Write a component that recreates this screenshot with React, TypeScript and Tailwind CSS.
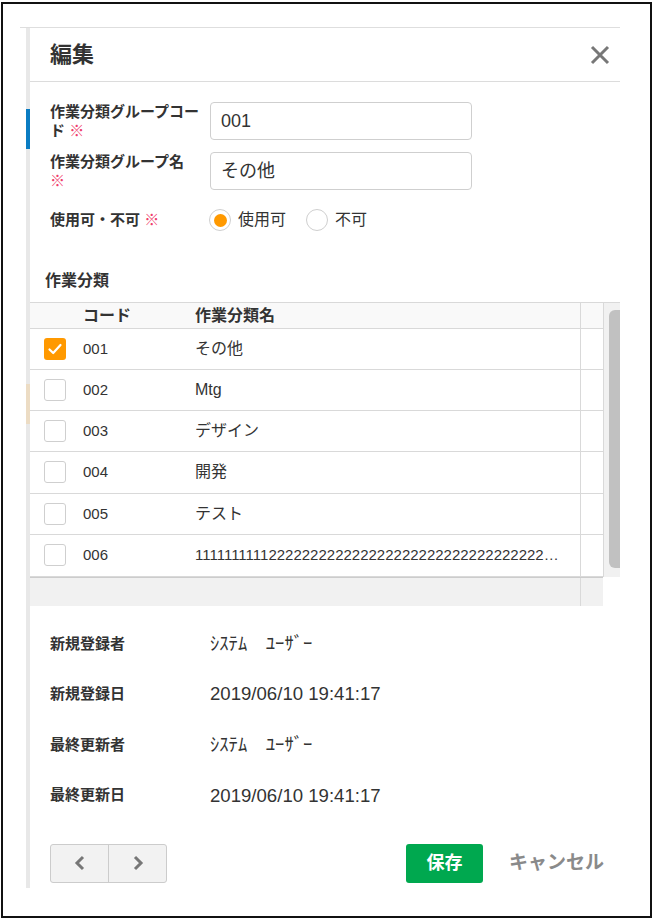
import React from "react";

const Req = () => <span className="text-[#ef3d6b] font-normal">※</span>;

const rows = [
  { code: "001", name: "その他", checked: true },
  { code: "002", name: "Mtg", checked: false },
  { code: "003", name: "デザイン", checked: false },
  { code: "004", name: "開発", checked: false },
  { code: "005", name: "テスト", checked: false },
  { code: "006", name: "1111111111" + "2".repeat(40), checked: false },
];

function Checkbox({ checked }: { checked: boolean }) {
  if (checked) {
    return (
      <div className="w-[22px] h-[22px] rounded-[3px] bg-[#ff9900] flex items-center justify-center">
        <svg width="16" height="16" viewBox="0 0 16 16" fill="none">
          <path d="M2.5 8.5 L6.2 12 L13.5 4" stroke="#fff" strokeWidth="2.2" strokeLinecap="round" strokeLinejoin="round" />
        </svg>
      </div>
    );
  }
  return <div className="w-[22px] h-[22px] rounded-[3px] border border-[#cfcfcf] bg-white" />;
}

function Radio({ on }: { on: boolean }) {
  return (
    <div className="w-[22px] h-[22px] rounded-full border border-[#cfcfcf] bg-white flex items-center justify-center">
      {on && <div className="w-[13px] h-[13px] rounded-full bg-[#ff9900]" />}
    </div>
  );
}

export default function App() {
  return (
    <div className="w-[656px] h-[924px] bg-white overflow-hidden font-['Liberation_Sans','Noto_Sans_CJK_JP',sans-serif] text-[#333]">
      <div className="ml-[1px] mt-[2px] w-[651px] h-[916px] border-2 border-[#111] overflow-hidden">
        <div className="ml-[17px] mt-[23px] w-[600px] border-t border-[#dedede]">
          <div className="flex">
            {/* background page strip */}
            <div className="w-[10px] flex">
              <div className="ml-[6px] w-[4px] flex flex-col">
                <div className="h-[81px] bg-[#e8e8e8]" />
                <div className="h-[40px] bg-[#0a7cc2]" />
                <div className="h-[235px] bg-[#e8e8e8]" />
                <div className="h-[40px] bg-[#ecdcc4]" />
                <div className="h-[464px] bg-[#e8e8e8]" />
              </div>
            </div>

            {/* modal */}
            <div className="w-[590px] bg-white">
              {/* header */}
              <div className="h-[54px] border-b border-[#dcdcdc] flex items-center justify-between pl-[20px] pr-[10px]">
                <div className="text-[22px] font-bold leading-none">編集</div>
                <svg width="20" height="20" viewBox="0 0 20 20" fill="none">
                  <path d="M2 2 L18 18 M18 2 L2 18" stroke="#777" strokeWidth="3" />
                </svg>
              </div>

              {/* form */}
              <div className="px-[20px] pt-[20px]">
                <div className="flex h-[38px]">
                  <div className="w-[152px] text-[15px] font-bold leading-[19px]">
                    作業分類グループコード <Req />
                  </div>
                  <div className="ml-[8px] w-[262px] h-[38px] border border-[#cfcfcf] rounded-[4px] flex items-center pl-[10px] text-[18px]">
                    001
                  </div>
                </div>
                <div className="flex h-[38px] mt-[12px]">
                  <div className="w-[152px] text-[15px] font-bold leading-[19px]">
                    作業分類グループ名 <Req />
                  </div>
                  <div className="ml-[8px] w-[262px] h-[38px] border border-[#cfcfcf] rounded-[4px] flex items-center pl-[10px] text-[18px]">
                    その他
                  </div>
                </div>
                <div className="flex items-center h-[22px] mt-[19px]">
                  <div className="w-[159px] text-[15px] font-bold">
                    使用可・不可 <Req />
                  </div>
                  <div className="flex items-center">
                    <Radio on={true} />
                    <span className="ml-[7px] text-[16px]">使用可</span>
                  </div>
                  <div className="flex items-center ml-[20px]">
                    <Radio on={false} />
                    <span className="ml-[7px] text-[16px]">不可</span>
                  </div>
                </div>
              </div>

              <div className="pl-[15px] mt-[39px] text-[16px] font-bold leading-[22px]">作業分類</div>

              {/* table */}
              <div className="mt-[10px] flex items-start">
                <div className="w-[573px] border-t border-[#d9d9d9]">
                  <div className="grid grid-cols-[45px_112px_393px_23px] h-[26px] bg-[#f9f9f9] border-b border-[#d9d9d9] text-[16px] font-bold">
                    <div />
                    <div className="pl-[8px] flex items-center">コード</div>
                    <div className="pl-[8px] flex items-center">作業分類名</div>
                    <div className="border-l border-[#d9d9d9]" />
                  </div>
                  {rows.map((r, i) => (
                    <div
                      key={r.code}
                      className={`grid grid-cols-[45px_112px_393px_23px] border-b border-[#d9d9d9] ${i >= 3 ? "h-[41.5px]" : "h-[41px]"}`}
                    >
                      <div className="pl-[14px] flex items-center">
                        <Checkbox checked={r.checked} />
                      </div>
                      <div className="pl-[8px] flex items-center text-[15px]">{r.code}</div>
                      <div className={`pl-[8px] pr-[16px] flex items-center min-w-0 ${i === 5 ? "text-[15px]" : "text-[16px]"}`}>
                        <span className="truncate">{r.name}</span>
                      </div>
                      <div className="border-l border-[#d9d9d9]" />
                    </div>
                  ))}
                  <div className="grid grid-cols-[45px_112px_393px_23px] h-[29px] bg-[#f1f1f1] border-t border-[#cccccc]">
                    <div />
                    <div />
                    <div />
                    <div className="border-l border-[#d9d9d9]" />
                  </div>
                </div>
                <div className="w-[17px] h-[275px] bg-[#f1f1f1] border-l border-t border-[#d9d9d9] pt-[7px] pl-[5px]">
                  <div className="h-[258px] bg-[#c1c1c1] rounded-l-[6px]" />
                </div>
              </div>

              {/* info */}
              <div className="px-[20px] mt-[13px]">
                {[
                  ["新規登録者", "ｼｽﾃﾑ　ﾕｰｻﾞｰ"],
                  ["新規登録日", "2019/06/10 19:41:17"],
                  ["最終更新者", "ｼｽﾃﾑ　ﾕｰｻﾞｰ"],
                  ["最終更新日", "2019/06/10 19:41:17"],
                ].map(([l, v]) => (
                  <div key={l} className="flex items-center h-[50.6px]">
                    <div className="w-[160px] text-[15px] font-bold">{l}</div>
                    <div className="text-[18.6px]">{v}</div>
                  </div>
                ))}
              </div>

              {/* footer */}
              <div className="pl-[20px] pr-[16px] mt-[23px] flex items-center justify-between h-[39px]">
                <div className="flex h-[39px] border border-[#cccccc] rounded-[3px] bg-[#f2f2f2]">
                  <div className="w-[57px] flex items-center justify-center">
                    <svg width="12" height="16" viewBox="0 0 12 16" fill="none">
                      <path d="M9 2 L3 8 L9 14" stroke="#777" strokeWidth="3" />
                    </svg>
                  </div>
                  <div className="w-[58px] border-l border-[#cccccc] flex items-center justify-center">
                    <svg width="12" height="16" viewBox="0 0 12 16" fill="none">
                      <path d="M3 2 L9 8 L3 14" stroke="#777" strokeWidth="3" />
                    </svg>
                  </div>
                </div>
                <div className="flex items-center">
                  <div className="w-[77px] h-[39px] bg-[#00a84f] rounded-[3px] text-white text-[18px] font-bold flex items-center justify-center">
                    保存
                  </div>
                  <div className="ml-[26px] text-[19px] font-bold text-[#8a8a8a]">キャンセル</div>
                </div>
              </div>
              <div className="h-[10px]" />
            </div>
          </div>
        </div>
      </div>
    </div>
  );
}
